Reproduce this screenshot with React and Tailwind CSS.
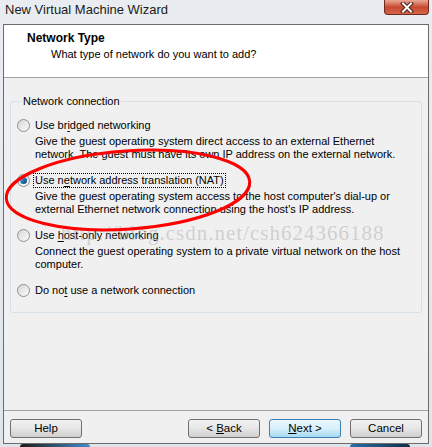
import React, { useState } from "react";

const FONT = "font-['Liberation_Sans','Arial',sans-serif]";

function Radio({ checked }) {
  return (
    <span className="flex h-[13px] w-[13px] shrink-0 items-center justify-center rounded-full border border-[#8e8f8f] bg-gradient-to-br from-[#d6d6d6] to-[#fbfbfb]">
      {checked && (
        <span className="h-[7px] w-[7px] rounded-full bg-gradient-to-br from-[#8fd0f5] via-[#1c76b8] to-[#0d3f78]" />
      )}
    </span>
  );
}

// label with one underlined access key
function Label({ text, keyIndex }) {
  return (
    <>
      {text.slice(0, keyIndex)}
      <span className="underline underline-offset-2">{text[keyIndex]}</span>
      {text.slice(keyIndex + 1)}
    </>
  );
}

function Option({ checked, text, keyIndex, desc, onPick }) {
  return (
    <div className="mb-[12px]" onClick={onPick}>
      <div className="flex h-[15px] items-center gap-[3px]">
        <Radio checked={checked} />
        <span
          className={`whitespace-nowrap leading-[13px] ${
            checked ? "border border-dotted border-black px-[1px]" : "px-[2px]"
          }`}
        >
          <Label text={text} keyIndex={keyIndex} />
        </span>
      </div>
      {desc && (
        <div className="mt-[2px] whitespace-nowrap pl-[18px] leading-[13px]">
          {desc.map((line) => (
            <div key={line}>{line}</div>
          ))}
        </div>
      )}
    </div>
  );
}

function WinButton({ children, primary }) {
  return (
    <button
      className={`h-[19px] w-[72px] rounded-[3px] border text-[11.5px] leading-none text-black ${
        primary
          ? "border-[#3c7fb1] bg-gradient-to-b from-[#eaf6fd] via-[#d9f0fc] to-[#a7d9f5]"
          : "border-[#707070] bg-gradient-to-b from-[#f2f2f2] via-[#e6e6e6] to-[#cfcfcf]"
      }`}
    >
      {children}
    </button>
  );
}

export default function App() {
  const [mode, setMode] = useState("nat");

  const options = [
    {
      id: "bridged",
      text: "Use bridged networking",
      keyIndex: 6,
      desc: [
        "Give the guest operating system direct access to an external Ethernet",
        "network. The guest must have its own IP address on the external network.",
      ],
    },
    {
      id: "nat",
      text: "Use network address translation (NAT)",
      keyIndex: 5,
      desc: [
        "Give the guest operating system access to the host computer's dial-up or",
        "external Ethernet network connection using the host's IP address.",
      ],
    },
    {
      id: "host",
      text: "Use host-only networking",
      keyIndex: 4,
      desc: [
        "Connect the guest operating system to a private virtual network on the host",
        "computer.",
      ],
    },
    { id: "none", text: "Do not use a network connection", keyIndex: 5 },
  ];

  return (
    <div
      className={`relative flex h-[447px] w-[432px] flex-col overflow-hidden bg-gradient-to-b from-[#e9edf1] to-[#dfe5eb] text-[11px] text-black ${FONT}`}
    >
      {/* title bar */}
      <div className="flex h-[24px] items-start justify-between pl-[5px] pr-[3px]">
        <span className="mt-[3px] text-[13px] leading-[14px] text-[#1a1a1a]">
          New Virtual Machine Wizard
        </span>
        <div className="flex h-[15px] w-[45px] items-center justify-center rounded-b-[4px] border border-t-0 border-[#6f2a1c] bg-gradient-to-b from-[#e9a898] via-[#c7492f] to-[#d8634a]">
          <svg width="14" height="11" viewBox="0 0 14 11">
            <path d="M3 1.5 L11 9.5 M11 1.5 L3 9.5" stroke="#4a2018" strokeWidth="4" strokeLinecap="square" />
            <path d="M3 1.5 L11 9.5 M11 1.5 L3 9.5" stroke="#ffffff" strokeWidth="2" strokeLinecap="square" />
          </svg>
        </div>
      </div>

      {/* client area */}
      <div className="mx-[3px] flex h-[420px] flex-col border border-[#6b6b6b] bg-[#f0f0f0]">
        <div className="h-[53px] border-b border-[#a0a0a0] bg-white pl-[23px] pt-[7px]">
          <div className="text-[12px] font-bold leading-[13px]">Network Type</div>
          <div className="mt-[3px] pl-[24px] leading-[13px]">
            What type of network do you want to add?
          </div>
        </div>

        <div className="flex-1 px-[6px] pt-[17px]">
          <fieldset className="rounded-[3px] border border-[#d5dfe5] pb-[2px] pl-[6px] pt-[10px]">
            <legend className="ml-[5px] px-[1px] leading-[13px]">Network connection</legend>
            {options.map((o) => (
              <Option
                key={o.id}
                checked={mode === o.id}
                text={o.text}
                keyIndex={o.keyIndex}
                desc={o.desc}
                onPick={() => setMode(o.id)}
              />
            ))}
          </fieldset>
        </div>

        <div className="flex h-[33px] items-start justify-between border-t border-[#a0a0a0] px-[6px] pt-[8px]">
          <WinButton>Help</WinButton>
          <div className="flex gap-[9px]">
            <WinButton>
              &lt; <span className="underline">B</span>ack
            </WinButton>
            <WinButton primary>
              <span className="underline">N</span>ext &gt;
            </WinButton>
            <WinButton>Cancel</WinButton>
          </div>
        </div>
      </div>

      {/* lower frame */}
      <div className="flex flex-1 items-end">
        <div className="ml-[20px] h-[3px] w-[70px] rounded-t-full bg-gradient-to-r from-[#1b1b1b] to-[#3a8fd0]" />
        <div className="flex-1" />
        <div className="mr-[22px] h-[3px] w-[60px] rounded-t-full bg-gradient-to-r from-[#2a6fa8] to-[#0f2f4a]" />
      </div>

      {/* watermark */}
      <div className="pointer-events-none absolute left-[61px] top-[221px] font-['Liberation_Serif',serif] text-[21px] leading-[24px] tracking-[1px] text-[rgba(160,160,160,0.42)]">
        http://blog.csdn.net/csh624366188
      </div>

      {/* red annotation */}
      <svg
        className="pointer-events-none absolute left-0 top-0"
        width="432"
        height="447"
        viewBox="0 0 432 447"
      >
        <ellipse
          cx="128"
          cy="190"
          rx="122"
          ry="39"
          transform="rotate(-4 128 190)"
          fill="none"
          stroke="#ff0000"
          strokeWidth="3"
        />
      </svg>
    </div>
  );
}
